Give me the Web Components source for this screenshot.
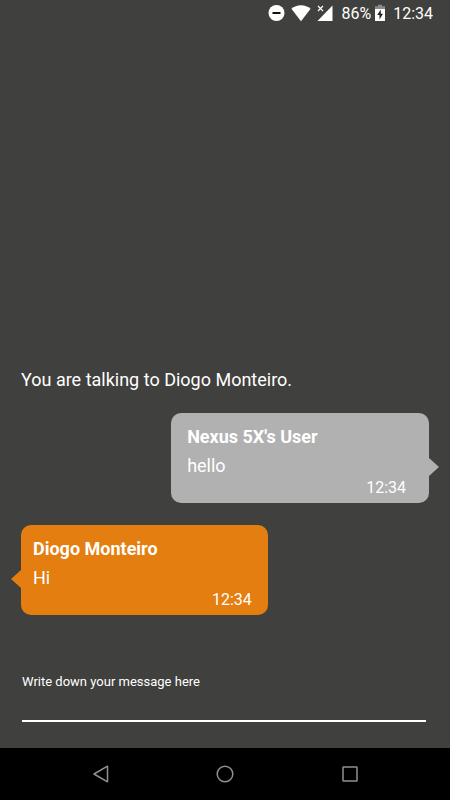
<!DOCTYPE html>
<html lang="en">
<head>
<meta charset="utf-8">
<meta name="viewport" content="width=device-width, initial-scale=1">
<title>Chat</title>
<style>
  body {
    margin: 0;
    background-color: #40403e;
    color: #fff;
    font-family: Roboto, "Liberation Sans", sans-serif;
  }
</style>
</head>
<body>
<chat-screen></chat-screen>

<script>
class StatusBar extends HTMLElement {
  constructor() {
    super();
    this.attachShadow({mode: 'open'});
    this.shadowRoot.appendChild(this.#template());
  }

  #template() {
    const template = document.createElement('template');
    template.innerHTML =
    `
    <style>
      :host {
        display: flex;
        justify-content: flex-end;
        align-items: center;
        height: 28px;
        padding-right: 17px;
        font-size: 16px;
        line-height: 28px;
      }

      svg {
        display: block;
        margin-bottom: 2px;
      }

      .wifi { margin-left: 6px; }
      .signal { margin-left: 6px; }
      .percent { margin-left: 8px; }
      .battery { margin-left: 4px; }
      .clock { margin-left: 8px; }
    </style>

    <svg width="17" height="18" viewBox="0 0 17 18" aria-hidden="true">
      <circle cx="8.5" cy="9" r="8" fill="#fff"/>
      <path d="M4.5 9h8" stroke="#111" stroke-width="2"/>
    </svg>
    <svg class="wifi" width="20" height="18" viewBox="0 0 20 18" fill="#fff" aria-hidden="true">
      <path d="M10 17.2L.4 4.8C3 2.6 6.3 1.3 10 1.3s7 1.3 9.6 3.5z"/>
    </svg>
    <svg class="signal" width="16" height="18" viewBox="0 0 16 18" aria-hidden="true">
      <path d="M15.5 1.5V17H.5L8 9.200z" fill="#fff"/>
      <path d="M1 2l5 5M6 2L1 7" stroke="#fff" stroke-width="1.2"/>
    </svg>
    <span class="percent"><slot name="battery"></slot></span>
    <svg class="battery" width="10" height="18" viewBox="0 0 10 18" aria-hidden="true">
      <path d="M3 .8h4v1.500h3V5H0V2.300h3z" fill="#8a8a88"/>
      <path d="M0 5h10v11.500q0 .5-.5.5h-9q-.5 0-.5-.5z" fill="#fff"/>
      <path d="M5.800 5.500L2.200 11h2.300v4.500L8 9.800H5.800z" fill="#222"/>
    </svg>
    <span class="clock"><slot name="clock"></slot></span>
    `;
    return template.content.cloneNode(true);
  }
}

class ChatMessage extends HTMLElement {
  constructor() {
    super();
    this.attachShadow({mode: 'open'});
    this.shadowRoot.appendChild(this.#template());
  }

  #template() {
    const template = document.createElement('template');
    template.innerHTML =
    `
    <style>
      :host {
        display: block;
        position: relative;
        box-sizing: border-box;
        border-radius: 10px;
        background-color: var(--bubble);
        font-size: 18px;
      }

      :host([side="sent"]) {
        --bubble: #b1b1b1;
        align-self: flex-end;
        width: 63.2%;
        padding: 12px 23px 4px 16px;
      }

      :host([side="received"]) {
        --bubble: #e47e10;
        align-self: flex-start;
        width: 60.5%;
        padding: 12px 16px 4px 12px;
      }

      /* pointer on the side of the bubble */
      :host::after {
        content: "";
        position: absolute;
        top: 45px;
        width: 10px;
        height: 18px;
        background-color: var(--bubble);
      }

      :host([side="sent"])::after {
        left: 100%;
        clip-path: polygon(0 0, 100% 50%, 0 100%);
      }

      :host([side="received"])::after {
        right: 100%;
        clip-path: polygon(100% 0, 0 50%, 100% 100%);
      }

      .name {
        margin-bottom: 6px;
        font-weight: bold;
        line-height: 24px;
      }

      .text {
        line-height: 22px;
      }

      .time {
        font-size: 16px;
        line-height: 22px;
        text-align: right;
      }
    </style>

    <div class="name"><slot name="name"></slot></div>
    <div class="text"><slot></slot></div>
    <div class="time"><slot name="time"></slot></div>
    `;
    return template.content.cloneNode(true);
  }
}

class MessageForm extends HTMLElement {
  constructor() {
    super();
    this.attachShadow({mode: 'open'});
    this.shadowRoot.appendChild(this.#template());
  }

  #template() {
    const template = document.createElement('template');
    template.innerHTML =
    `
    <style>
      :host {
        display: block;
        padding: 0 24px 26px 22px;
      }

      label {
        display: block;
        font-size: 13px;
        line-height: 16px;
      }

      input {
        display: block;
        box-sizing: border-box;
        width: 100%;
        height: 32px;
        padding: 0;
        border: 0;
        border-bottom: 2px solid #fff;
        border-radius: 0;
        outline: none;
        background: none;
        color: inherit;
        font: inherit;
      }
    </style>

    <label for="message">Write down your message here</label>
    <input id="message" type="text" autocomplete="off">
    `;
    return template.content.cloneNode(true);
  }
}

class NavBar extends HTMLElement {
  constructor() {
    super();
    this.attachShadow({mode: 'open'});
    this.shadowRoot.appendChild(this.#template());
  }

  #template() {
    const template = document.createElement('template');
    template.innerHTML =
    `
    <style>
      :host {
        display: flex;
        justify-content: space-evenly;
        align-items: center;
        height: 52px;
        padding: 0 4%;
        background-color: #000;
      }

      button {
        padding: 10px 32px;
        border: 0;
        background: none;
      }

      svg {
        display: block;
        fill: none;
        stroke: #909090;
        stroke-width: 1.5;
        stroke-linejoin: round;
      }
    </style>

    <button type="button" aria-label="Back">
      <svg width="20" height="20" viewBox="0 0 20 20"><path d="M16.500 2.200v15.600L3 10z"/></svg>
    </button>
    <button type="button" aria-label="Home">
      <svg width="20" height="20" viewBox="0 0 20 20"><circle cx="10" cy="10" r="7.800"/></svg>
    </button>
    <button type="button" aria-label="Recent apps">
      <svg width="20" height="20" viewBox="0 0 20 20"><rect x="3" y="3" width="14" height="14" rx=".5"/></svg>
    </button>
    `;
    return template.content.cloneNode(true);
  }
}

class ChatScreen extends HTMLElement {
  constructor() {
    super();
    this.attachShadow({mode: 'open'});
    this.shadowRoot.appendChild(this.#template());
  }

  #template() {
    const template = document.createElement('template');
    template.innerHTML =
    `
    <style>
      :host {
        display: flex;
        flex-direction: column;
        min-height: 100vh;
      }

      /* the conversation sticks to the bottom */
      main {
        display: flex;
        flex: 1;
        flex-direction: column;
        justify-content: flex-end;
        gap: 22px;
        padding: 0 21px 59px;
      }

      p {
        margin: 0;
        font-size: 18px;
        line-height: 22px;
      }
    </style>

    <status-bar>
      <span slot="battery">86%</span>
      <span slot="clock">12:34</span>
    </status-bar>
    <main>
      <p>You are talking to Diogo Monteiro.</p>
      <chat-message side="sent">
        <span slot="name">Nexus 5X's User</span>
        hello
        <span slot="time">12:34</span>
      </chat-message>
      <chat-message side="received">
        <span slot="name">Diogo Monteiro</span>
        Hi
        <span slot="time">12:34</span>
      </chat-message>
    </main>
    <message-form></message-form>
    <nav-bar></nav-bar>
    `;
    return template.content.cloneNode(true);
  }
}

window.customElements.define('status-bar', StatusBar);
window.customElements.define('chat-message', ChatMessage);
window.customElements.define('message-form', MessageForm);
window.customElements.define('nav-bar', NavBar);
window.customElements.define('chat-screen', ChatScreen);
</script>
</body>
</html>
